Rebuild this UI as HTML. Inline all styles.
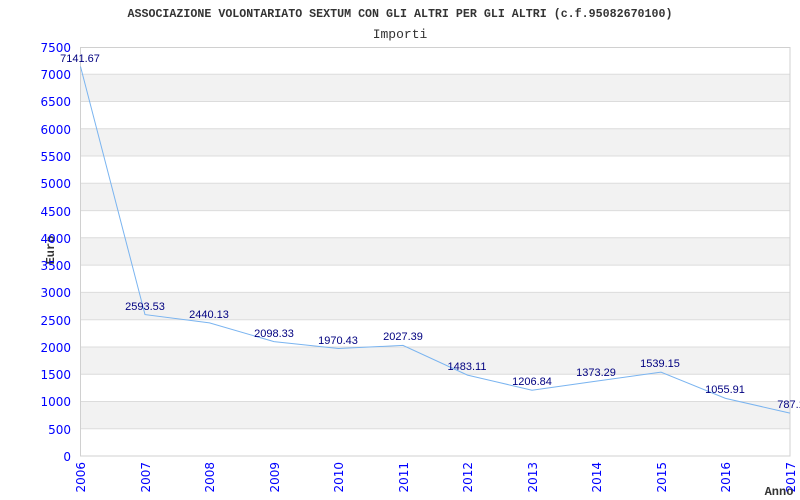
<!DOCTYPE html>
<html><head><meta charset="utf-8"><style>html,body{margin:0;padding:0;background:#fff}svg{display:block}</style></head>
<body>
<svg width="800" height="500" xmlns="http://www.w3.org/2000/svg">
<rect width="800" height="500" fill="#fff"/>
<g fill="#f2f2f2">
<rect x="80" y="401.5" width="710" height="27.3"/>
<rect x="80" y="347" width="710" height="27.3"/>
<rect x="80" y="292.4" width="710" height="27.3"/>
<rect x="80" y="237.8" width="710" height="27.3"/>
<rect x="80" y="183.3" width="710" height="27.3"/>
<rect x="80" y="128.7" width="710" height="27.3"/>
<rect x="80" y="74.2" width="710" height="27.3"/>
</g>
<g stroke="#dcdcdc" stroke-width="1">
<line x1="80" y1="428.8" x2="790" y2="428.8"/><line x1="80" y1="401.5" x2="790" y2="401.5"/>
<line x1="80" y1="374.2" x2="790" y2="374.2"/><line x1="80" y1="347" x2="790" y2="347"/>
<line x1="80" y1="319.7" x2="790" y2="319.7"/><line x1="80" y1="292.4" x2="790" y2="292.4"/>
<line x1="80" y1="265.1" x2="790" y2="265.1"/><line x1="80" y1="237.8" x2="790" y2="237.8"/>
<line x1="80" y1="210.6" x2="790" y2="210.6"/><line x1="80" y1="183.3" x2="790" y2="183.3"/>
<line x1="80" y1="156" x2="790" y2="156"/><line x1="80" y1="128.7" x2="790" y2="128.7"/>
<line x1="80" y1="101.5" x2="790" y2="101.5"/><line x1="80" y1="74.2" x2="790" y2="74.2"/>
</g>
<rect x="80.5" y="47.5" width="709.5" height="408.5" fill="none" stroke="#d0d0d0"/>
<g font-family="Liberation Mono, monospace" fill="#333">
<text x="400" y="17" text-anchor="middle" font-size="12" font-weight="bold" textLength="545" lengthAdjust="spacingAndGlyphs">ASSOCIAZIONE VOLONTARIATO SEXTUM CON GLI ALTRI PER GLI ALTRI (c.f.95082670100)</text>
<text x="400" y="38" text-anchor="middle" font-size="13">Importi</text>
<text x="779" y="495" text-anchor="middle" font-size="12" font-weight="bold">Anno</text>
<text transform="translate(54,250) rotate(-90)" text-anchor="middle" font-size="12" font-weight="bold">Euro</text>
</g>
<g font-family="DejaVu Sans, sans-serif" font-size="12" fill="#0000ff" text-anchor="end">
<text x="71" y="52">7500</text><text x="71" y="79">7000</text><text x="71" y="106">6500</text>
<text x="71" y="134">6000</text><text x="71" y="161">5500</text><text x="71" y="188">5000</text>
<text x="71" y="216">4500</text><text x="71" y="243">4000</text><text x="71" y="270">3500</text>
<text x="71" y="297">3000</text><text x="71" y="325">2500</text><text x="71" y="352">2000</text>
<text x="71" y="379">1500</text><text x="71" y="406">1000</text><text x="71" y="434">500</text>
<text x="71" y="461">0</text>
</g>
<g font-family="DejaVu Sans, sans-serif" font-size="12" fill="#0000ff" text-anchor="end">
<text transform="translate(85,462) rotate(-90)">2006</text>
<text transform="translate(150,462) rotate(-90)">2007</text>
<text transform="translate(214,462) rotate(-90)">2008</text>
<text transform="translate(279,462) rotate(-90)">2009</text>
<text transform="translate(343,462) rotate(-90)">2010</text>
<text transform="translate(408,462) rotate(-90)">2011</text>
<text transform="translate(472,462) rotate(-90)">2012</text>
<text transform="translate(537,462) rotate(-90)">2013</text>
<text transform="translate(601,462) rotate(-90)">2014</text>
<text transform="translate(666,462) rotate(-90)">2015</text>
<text transform="translate(730,462) rotate(-90)">2016</text>
<text transform="translate(795,462) rotate(-90)">2017</text>
</g>
<polyline fill="none" stroke="#7ab4f0" stroke-width="1" points="80.5,66.5 145,314.6 209.5,322.9 274,341.6 338.5,348.5 403,345.4 467.5,375.1 532,390.2 596.5,381.1 661,372.1 725.5,398.4 790,413.1"/>
<g font-family="Liberation Sans, sans-serif" font-size="11" fill="#000080" text-anchor="middle">
<text x="80" y="62">7141.67</text>
<text x="145" y="310">2593.53</text>
<text x="209" y="318">2440.13</text>
<text x="274" y="337">2098.33</text>
<text x="338" y="344">1970.43</text>
<text x="403" y="340">2027.39</text>
<text x="467" y="370">1483.11</text>
<text x="532" y="385">1206.84</text>
<text x="596" y="376">1373.29</text>
<text x="660" y="367">1539.15</text>
<text x="725" y="393">1055.91</text>
<text x="791" y="408">787.1</text>
</g>
</svg>
</body></html>
